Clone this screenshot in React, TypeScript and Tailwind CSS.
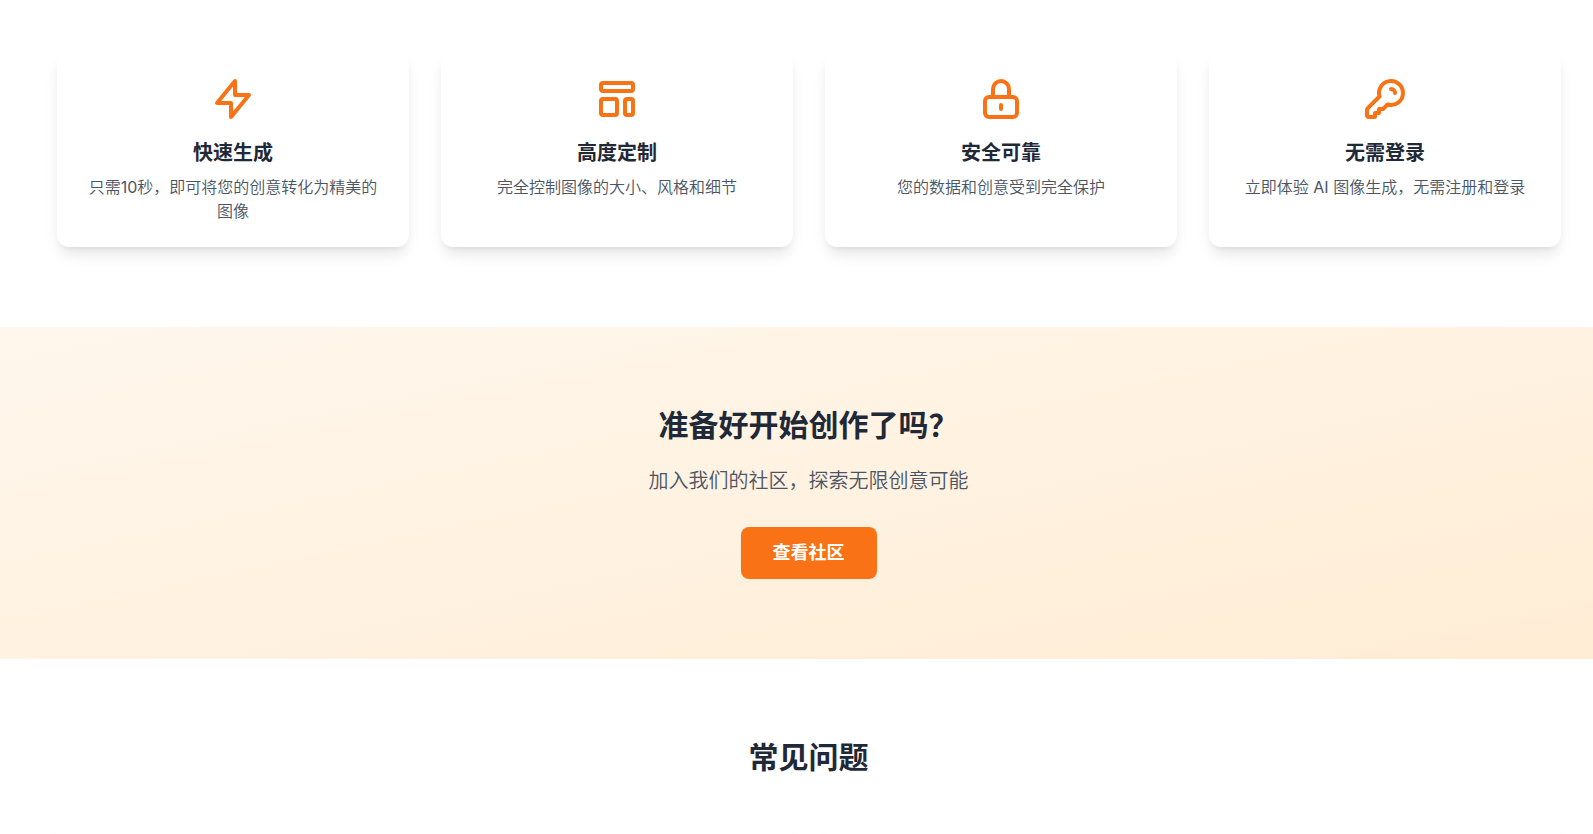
const features = [
  {
    title: '快速生成',
    description: '只需10秒，即可将您的创意转化为精美的图像',
    icon: 'M13 10V3L4 14h7v7l9-11h-7z',
  },
  {
    title: '高度定制',
    description: '完全控制图像的大小、风格和细节',
    icon: 'M4 5a1 1 0 011-1h14a1 1 0 011 1v2a1 1 0 01-1 1H5a1 1 0 01-1-1V5zM4 13a1 1 0 011-1h6a1 1 0 011 1v6a1 1 0 01-1 1H5a1 1 0 01-1-1v-6zM16 13a1 1 0 011-1h2a1 1 0 011 1v6a1 1 0 01-1 1h-2a1 1 0 01-1-1v-6z',
  },
  {
    title: '安全可靠',
    description: '您的数据和创意受到完全保护',
    icon: 'M12 15v2m-6 4h12a2 2 0 002-2v-6a2 2 0 00-2-2H6a2 2 0 00-2 2v6a2 2 0 002 2zm10-10V7a4 4 0 00-8 0v4h8z',
  },
  {
    title: '无需登录',
    description: '立即体验 AI 图像生成，无需注册和登录',
    icon: 'M15 7a2 2 0 012 2m4 0a6 6 0 01-7.743 5.743L11 17H9v2H7v2H4a1 1 0 01-1-1v-2.586a1 1 0 01.293-.707l5.964-5.964A6 6 0 1121 9z',
  },
];

function FeatureCard({ title, description, icon }: { title: string; description: string; icon: string }) {
  return (
    <div className="bg-white p-6 rounded-xl shadow-lg text-center">
      <svg className="w-12 h-12 mx-auto mb-4 text-[#f97316]" fill="none" stroke="currentColor" viewBox="0 0 24 24" aria-hidden="true">
        <path strokeLinecap="round" strokeLinejoin="round" strokeWidth={2} d={icon} />
      </svg>
      <h3 className="text-xl font-semibold text-[#1f2937] mb-2">{title}</h3>
      <p className="font-['Inter','Noto_Sans_CJK_SC_DemiLight','Noto_Sans_CJK_SC',sans-serif] text-[#4b5563]">{description}</p>
    </div>
  );
}

export default function App() {
  return (
    <main lang="zh-CN" className="h-screen overflow-hidden bg-white font-['Inter','Noto_Sans_CJK_SC',sans-serif]">
      <section className="pt-[51px] pb-20 pl-[57px] pr-8">
        <div className="grid grid-cols-1 sm:grid-cols-2 lg:grid-cols-4 gap-8">
          {features.map(f => (
            <FeatureCard key={f.title} {...f} />
          ))}
        </div>
      </section>

      <section className="py-20 pl-14 pr-8 text-center bg-[linear-gradient(to_bottom_right,#fff7ed,#ffedd5)]">
        <h2 className="text-3xl font-bold text-[#1f2937] mb-6">准备好开始创作了吗？</h2>
        <p className="font-['Inter','Noto_Sans_CJK_SC_DemiLight','Noto_Sans_CJK_SC',sans-serif] text-xl text-[#4b5563] mb-8">
          加入我们的社区，探索无限创意可能
        </p>
        <button className="block mx-auto px-8 py-3 bg-[#f97316] hover:bg-[#ea580c] text-white text-lg font-semibold rounded-lg transition-colors">
          查看社区
        </button>
      </section>

      <section className="py-20 pl-14 pr-8">
        <h2 className="text-3xl font-bold text-[#1f2937] text-center mb-12">常见问题</h2>
        <div className="grid grid-cols-1 md:grid-cols-2 gap-8">
          <div className="bg-white rounded-xl shadow-lg h-32" />
          <div className="bg-white rounded-xl shadow-lg h-32" />
        </div>
      </section>
    </main>
  );
}
